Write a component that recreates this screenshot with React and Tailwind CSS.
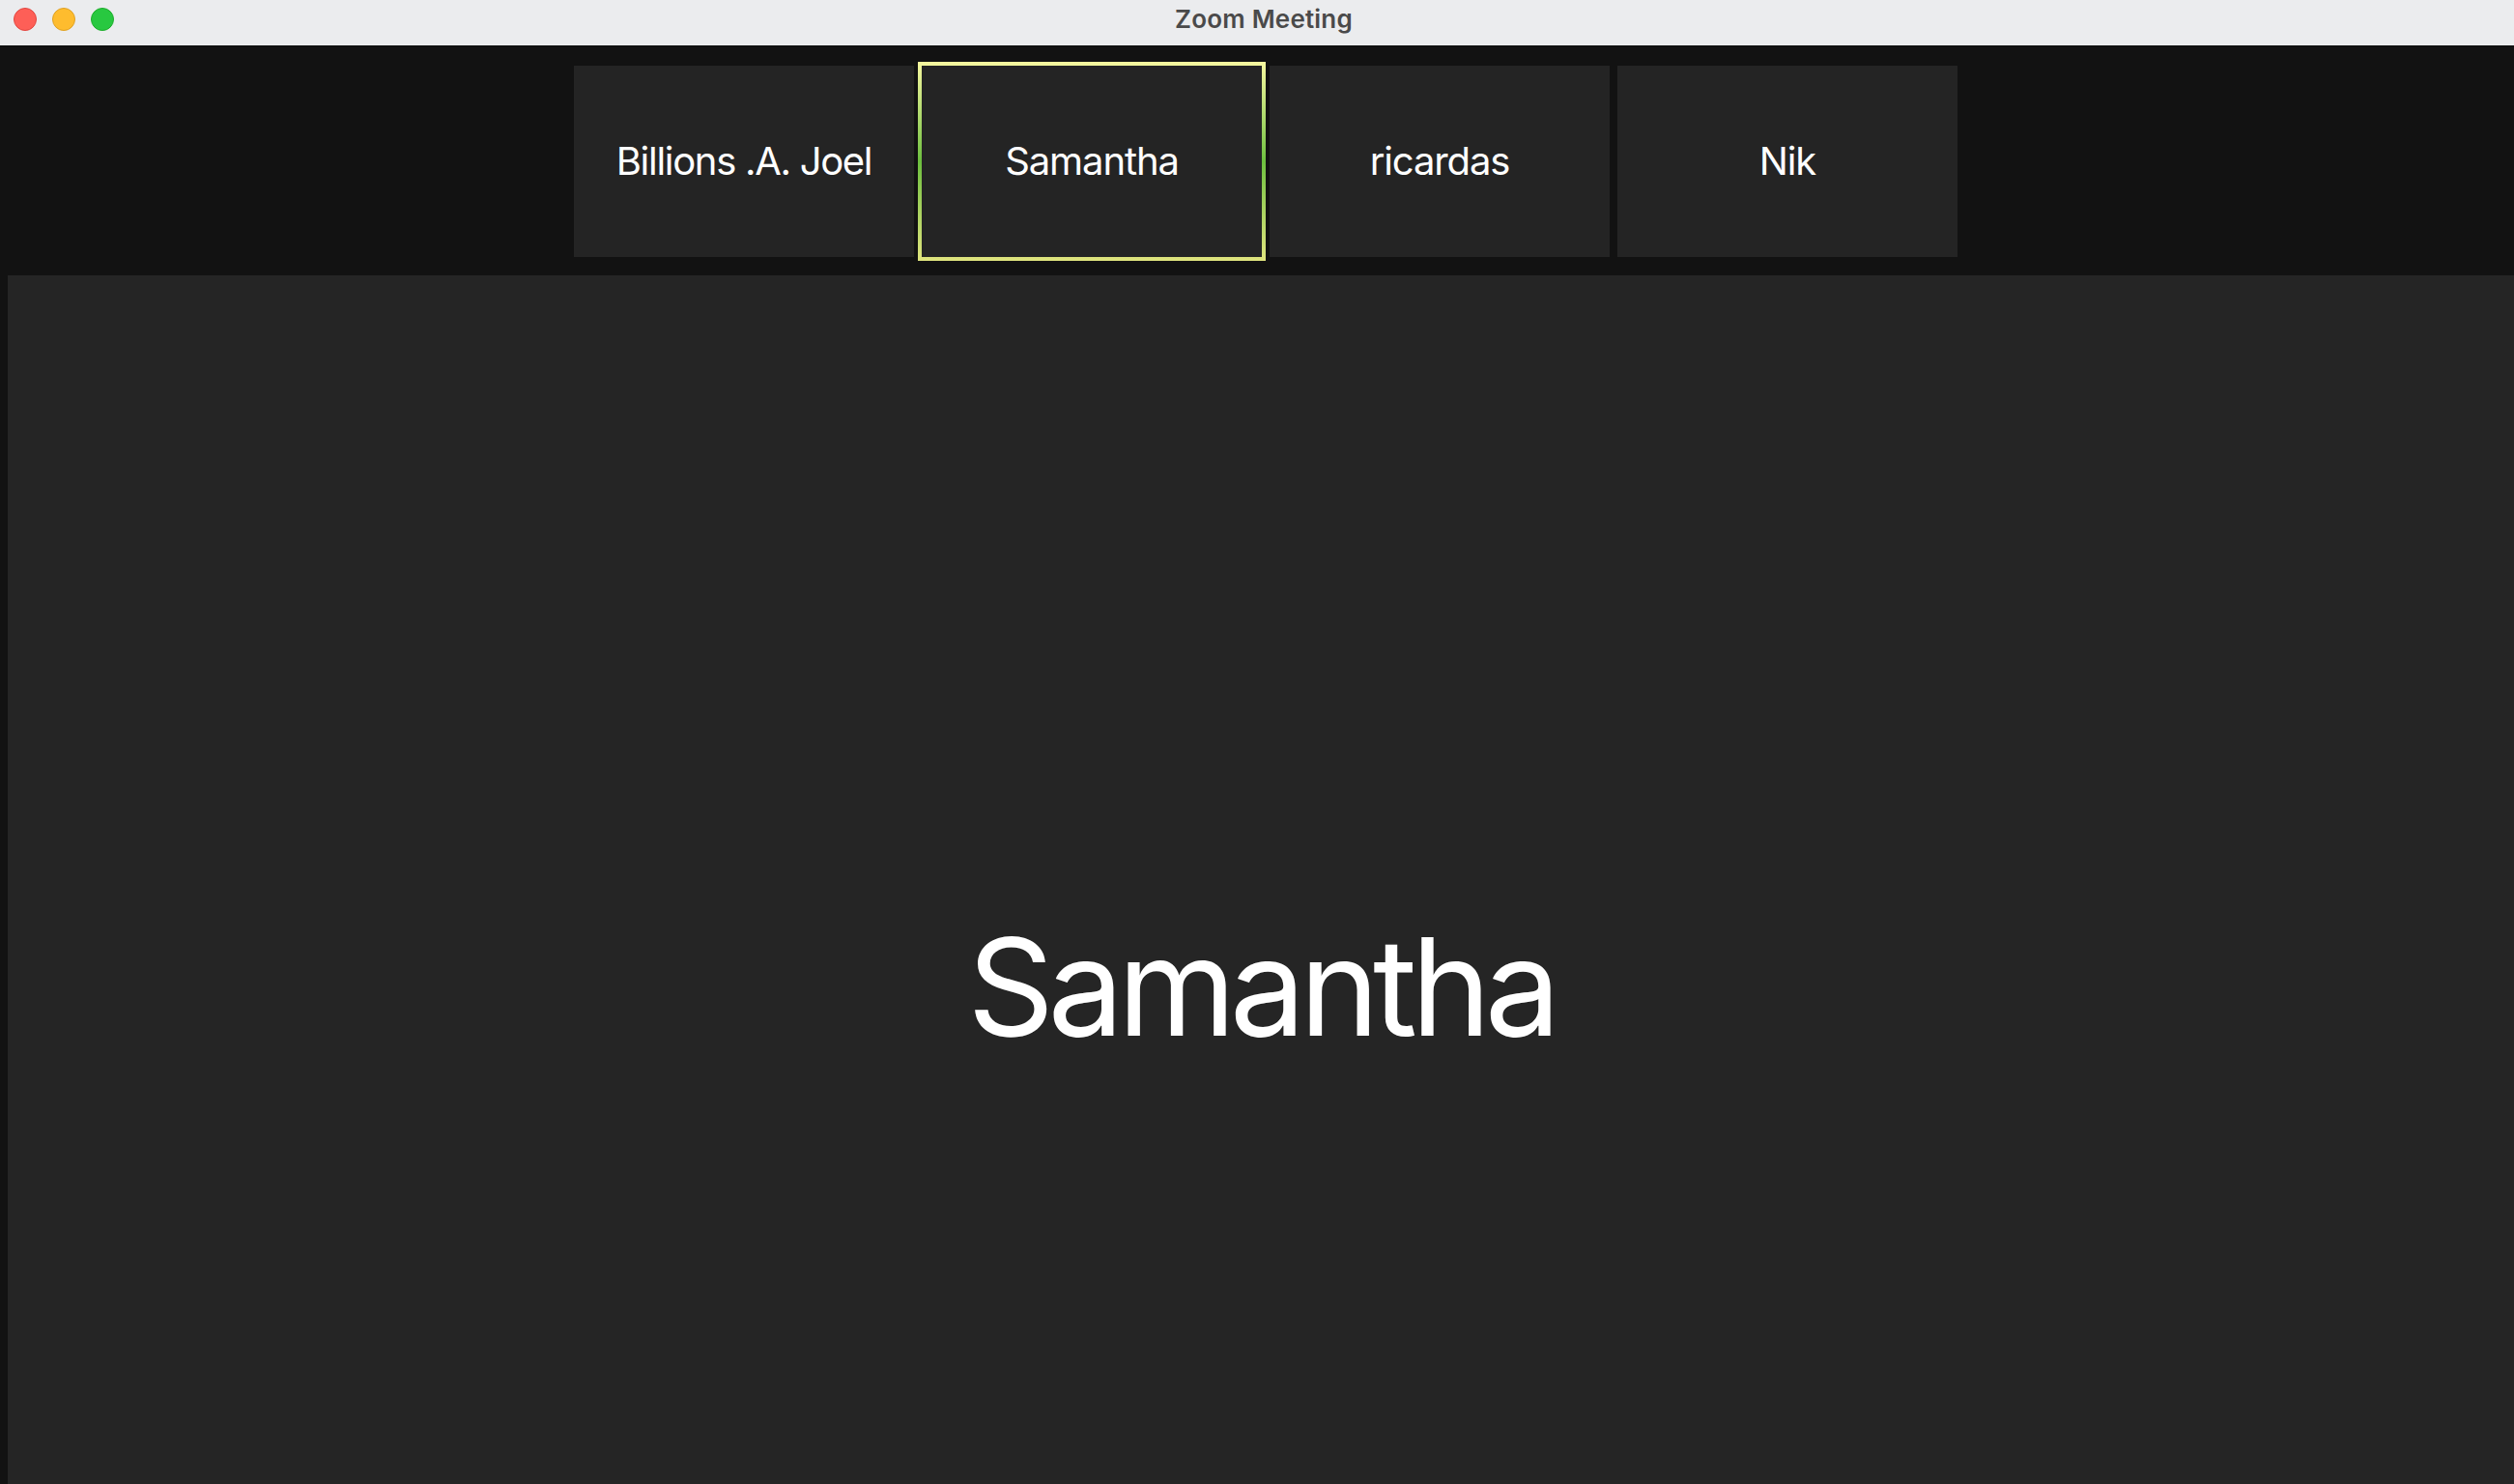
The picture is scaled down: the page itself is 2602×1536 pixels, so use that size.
export default function App() {
  const font = { fontFamily: "Inter, 'Noto Sans', sans-serif" };
  return (
    <div className="w-[2602px] h-[1536px] flex flex-col bg-[#121212] overflow-hidden" style={font}>
      <div className="h-12 shrink-0 relative bg-[#ebecee] flex items-center justify-center border-b border-[#0c0c0c]">
        <div className="absolute left-[14px] top-2 flex gap-4">
          <div className="w-6 h-6 rounded-full bg-[#fe5f57] border border-[#e2463f]" />
          <div className="w-6 h-6 rounded-full bg-[#febc2e] border border-[#dfa123]" />
          <div className="w-6 h-6 rounded-full bg-[#28c840] border border-[#1dad2b]" />
        </div>
        <span className="text-[26px] font-semibold text-[#4a4a4a] tracking-[0.2px] pl-[14px] pb-[9px]">Zoom Meeting</span>
      </div>
      <div className="h-[237px] shrink-0 flex items-center justify-center gap-2 pl-[18px]">
        <div className="w-[352px] h-[198px] bg-[#242424] flex items-center justify-center text-white text-[40px] tracking-[-1.3px]">
          Billions .A. Joel
        </div>
        <div className="w-[360px] h-[206px] -m-1 p-1 bg-gradient-to-b from-[#f6f79f] via-[#6cbf3e] to-[#dfe47e]">
          <div className="w-full h-full bg-[#242424] flex items-center justify-center text-white text-[40px] tracking-[-1.1px]">
            Samantha
          </div>
        </div>
        <div className="w-[352px] h-[198px] bg-[#242424] flex items-center justify-center text-white text-[40px] tracking-[-1.1px]">
          ricardas
        </div>
        <div className="w-[352px] h-[198px] bg-[#242424] flex items-center justify-center text-white text-[40px] tracking-[-1.1px]">
          Nik
        </div>
      </div>
      <div className="flex-1 ml-2 bg-[#252525] flex justify-center items-start pt-[666px]">
        <span className="text-white text-[140px] leading-none tracking-[-6.5px]">Samantha</span>
      </div>
    </div>
  );
}
